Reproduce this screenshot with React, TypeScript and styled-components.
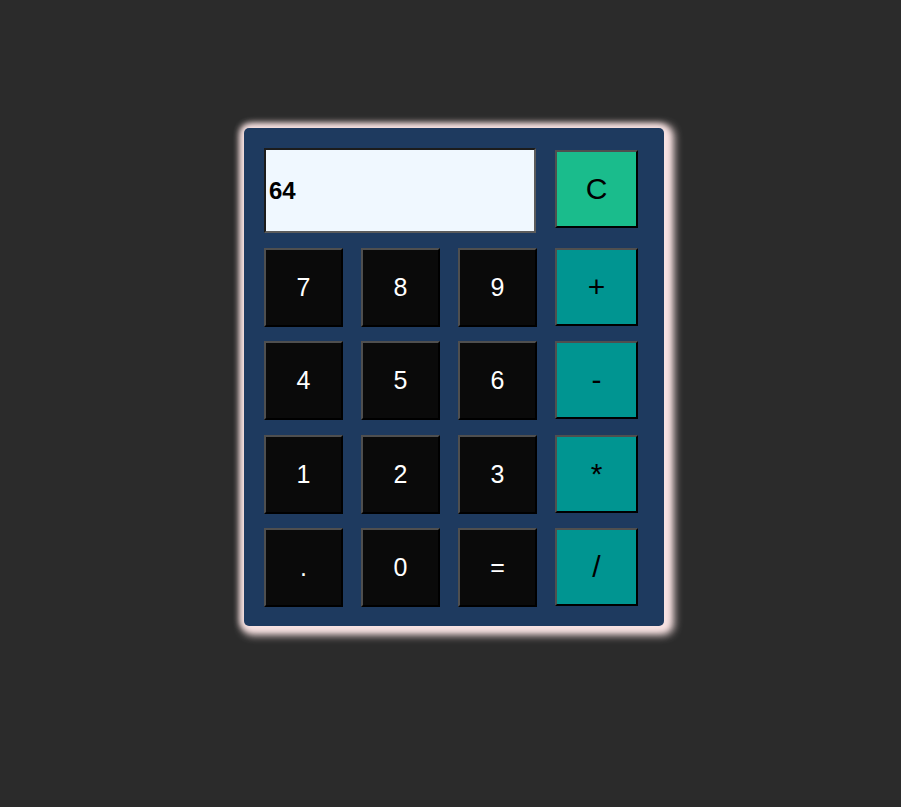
import React from "react";
import styled, { createGlobalStyle } from "styled-components";

const GlobalStyle = createGlobalStyle`
  html, body {
    margin: 0;
    padding: 0;
    background: #2b2b2b;
    font-family: "Liberation Sans", Arial, sans-serif;
  }
`;

const Page = styled.div`
  min-height: 807px;
  padding: 128px 0 0 244px;
  box-sizing: border-box;
`;

const Calculator = styled.div`
  display: inline-grid;
  grid-template-columns: 79px 79px 79px 83px;
  grid-template-rows: 85px repeat(4, 79px);
  column-gap: 18px;
  row-gap: 14.5px;
  padding: 20px 26px 19px 20px;
  background: #1e3a5f;
  border-radius: 5px;
  box-shadow: 0 0 6px 4px #f8e2e2, 4px 3px 8px 6px #f8e2e2;
`;

const Display = styled.input`
  grid-column: span 3;
  box-sizing: border-box;
  width: 272px;
  height: 85px;
  margin: 0;
  padding: 0 3px;
  background: #f0f8ff;
  border-style: solid;
  border-width: 2px;
  border-color: #1c1c1c #5c5c5c #5c5c5c #1c1c1c;
  color: #000;
  font-family: "Liberation Sans", Arial, sans-serif;
  font-weight: bold;
  font-size: 24px;
  outline: none;
`;

const Key = styled.button<{ $kind?: "num" | "op" | "clear" }>`
  box-sizing: border-box;
  width: 100%;
  height: ${(p) => (p.$kind === "num" ? "79px" : "78px")};
  align-self: start;
  margin: ${(p) => (p.$kind === "clear" ? "2px 0 0" : "0")};
  padding: 0;
  border-style: solid;
  border-width: 2px;
  border-color: #4f4f4f #000 #000 #4f4f4f;
  background: ${(p) =>
    p.$kind === "clear" ? "#1abc8c" : p.$kind === "op" ? "#009591" : "#0a0a0a"};
  color: ${(p) => (p.$kind === "num" ? "#fff" : "#000")};
  font-family: "Liberation Sans", Arial, sans-serif;
  font-size: ${(p) => (p.$kind === "num" ? "25px" : "30px")};
  cursor: pointer;
`;

const rows: [string, string, string, string][] = [
  ["7", "8", "9", "+"],
  ["4", "5", "6", "-"],
  ["1", "2", "3", "*"],
  [".", "0", "=", "/"],
];

export default function App() {
  return (
    <>
      <GlobalStyle />
      <Page>
        <Calculator>
          <Display type="text" value="64" readOnly />
          <Key $kind="clear">C</Key>
          {rows.map((r) =>
            r.map((k, i) => (
              <Key key={k} $kind={i === 3 ? "op" : "num"}>
                {k}
              </Key>
            ))
          )}
        </Calculator>
      </Page>
    </>
  );
}
